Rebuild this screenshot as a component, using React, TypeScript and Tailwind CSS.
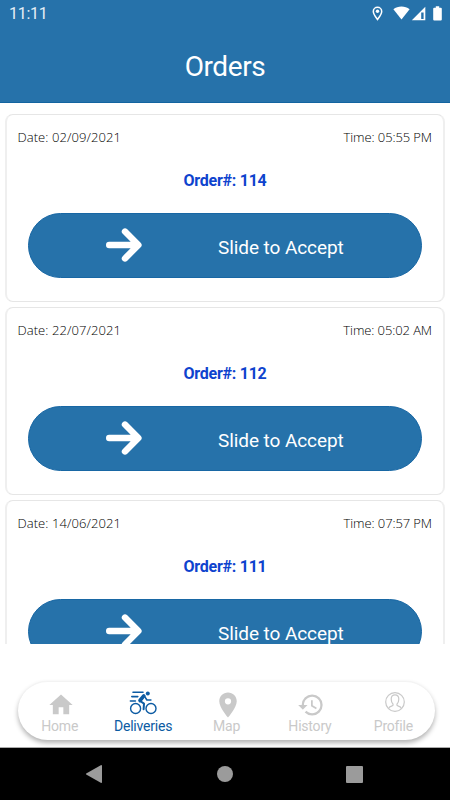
import React from "react";

interface Order {
  id: number;
  date: string;
  time: string;
}

interface Tab {
  label: string;
  icon: React.ReactNode;
  active?: boolean;
}

const orders: Order[] = [
  { id: 114, date: "02/09/2021", time: "05:55 PM" },
  { id: 112, date: "22/07/2021", time: "05:02 AM" },
  { id: 111, date: "14/06/2021", time: "07:57 PM" },
];

const HomeIcon = () => (
  <svg className="mt-[2px] ml-[3px]" width="28" height="28" viewBox="0 0 24 24" fill="currentColor">
    <path d="M10 20v-6h4v6h5v-8h3L12 3 2 12h3v8z" />
  </svg>
);

const BikeIcon = () => (
  <svg className="mb-[3px]" width="28" height="26" viewBox="0 0 28 26" fill="none" stroke="currentColor">
    <g strokeWidth="1.4">
      <circle cx="6.6" cy="18.5" r="5" />
      <circle cx="22" cy="18.5" r="5" />
    </g>
    <circle cx="18.8" cy="3.4" r="2" fill="currentColor" stroke="none" />
    <g strokeLinecap="round" strokeLinejoin="round">
      <path d="M4 2.2h10M2.8 6.6h6M1.4 11h5" strokeWidth="1.6" />
      <path d="M14.8 5.8l-3.8 4.7" strokeWidth="3.6" />
      <path d="M11.2 11l3.8 2.6-.4 5.6" strokeWidth="2" />
      <path d="M15.6 6.4l2.3 3.6h4" strokeWidth="1.6" />
    </g>
  </svg>
);

const PinIcon = () => (
  <svg className="mt-[2px] ml-[3px]" width="30" height="30" viewBox="0 0 24 24" fill="currentColor">
    <path d="M12 2C8.13 2 5 5.13 5 9c0 5.25 7 13 7 13s7-7.75 7-13c0-3.87-3.13-7-7-7zm0 9.5a2.500 2.500 0 1 1 0-5 2.500 2.500 0 0 1 0 5z" />
  </svg>
);

const HistoryIcon = () => (
  <svg className="mt-[2px] ml-[3px]" width="28" height="28" viewBox="0 0 24 24" fill="currentColor">
    <path d="M13 3a9 9 0 0 0-9 9H1l3.89 3.89.07.14L9 12H6c0-3.87 3.13-7 7-7s7 3.13 7 7-3.13 7-7 7c-1.93 0-3.68-.79-4.94-2.06l-1.42 1.42A8.954 8.954 0 0 0 13 21a9 9 0 0 0 0-18zm-1 5v5l4.28 2.54.72-1.21-3.5-2.08V8H12z" />
  </svg>
);

const ProfileIcon = () => (
  <svg className="mb-[4px] ml-[3px]" width="22" height="22" viewBox="0 0 22 22" fill="none" stroke="currentColor" strokeWidth="1.2">
    <circle cx="11" cy="11" r="9.3" />
    <path d="M4.6 17.6c.4-1.500 1.200-1.900 3-2.400 1.400-.4 1.800-.9 1.500-2-1.500-1.400-1.900-3-1.900-5.200C7.200 5.400 8.600 3.800 11 3.800s3.800 1.600 3.800 4.200c0 2.200-.4 3.800-1.900 5.200-.3 1.100.1 1.600 1.500 2 1.800.5 2.600.9 3 2.400" />
  </svg>
);

const tabs: Tab[] = [
  { label: "Home", icon: <HomeIcon /> },
  { label: "Deliveries", icon: <BikeIcon />, active: true },
  { label: "Map", icon: <PinIcon /> },
  { label: "History", icon: <HistoryIcon /> },
  { label: "Profile", icon: <ProfileIcon /> },
];

function StatusBar() {
  return (
    <div className="flex h-7 items-center justify-between pl-[9px] pr-2 text-white">
      <span className="text-[16px] leading-7 tracking-[-0.300px] text-[#e4eef6]">11:11</span>
      <div className="-mt-[2px] flex items-center">
        <svg className="mr-[10px]" width="11" height="15" viewBox="0 0 11 15" fill="none" stroke="currentColor">
          <path d="M5.500 13.500C3.500 10.800 1.300 8 1.300 5.400a4.200 4.200 0 0 1 8.400 0c0 2.600-2.200 5.400-4.200 8.100z" strokeWidth="1.500" />
          <circle cx="5.500" cy="5.300" r="1.700" fill="currentColor" stroke="none" />
        </svg>
        <svg className="mr-[1px]" width="17" height="14" viewBox="0 0 17 14" fill="currentColor">
          <path d="M8.500 13.500L.4 3.300C2.600 1.500 5.400.5 8.500.5s5.900 1 8.100 2.800z" />
        </svg>
        <svg className="mr-[7px]" width="15" height="15" viewBox="0 0 15 15">
          <path d="M14.300.8v13.500H.8z" fill="#fff" />
          <path d="M10.200 6.500h2.400V13h-2.400z" fill="#2672aa" />
        </svg>
        <svg width="9" height="15" viewBox="0 0 9 15" fill="currentColor">
          <path d="M2.800.3h3.400v1.400h1.600q1 0 1 1v10.800q0 1-1 1H1.200q-1 0-1-1V2.700q0-1 1-1h1.600z" />
        </svg>
      </div>
    </div>
  );
}

function OrderCard({ order }: { order: Order }) {
  return (
    <div className="h-[188px] shrink-0 rounded-[8px] border-x-2 border-y border-x-[#efefef] border-y-[#e6e6e6] bg-white px-[21px]">
      <div className="-mx-[10px] mt-[12px] flex justify-between font-['Open_Sans'] text-[13px] leading-5 font-light text-black">
        <span className="-ml-[0.500px] tracking-[0.070px]">Date: {order.date}</span>
        <span className="tracking-[-0.100px]">Time: {order.time}</span>
      </div>
      <div className="mt-6 text-center text-[16px] leading-5 font-bold tracking-[-0.250px] text-[#0e43ce]">
        Order#: {order.id}
      </div>
      <button className="mt-[22px] flex h-[65px] w-full items-center rounded-full border border-[#1867a4] bg-[#2672aa] text-white">
        <svg className="-mt-px ml-[76px]" width="38" height="36" viewBox="0 0 38 36" fill="none" stroke="currentColor" strokeWidth="6.400" strokeLinecap="round" strokeLinejoin="round">
          <path d="M4.200 18h28M20 4.600L33.400 18 20 31.400" />
        </svg>
        <span className="mt-[4px] ml-[75px] text-[19px] leading-6 tracking-[-0.080px] whitespace-nowrap">
          Slide to Accept
        </span>
      </button>
    </div>
  );
}

function TabBar() {
  return (
    <nav className="mt-[37px] mr-[15px] ml-[18px] flex h-[59px] shrink-0 rounded-full border-t border-[#f3f3f3] bg-white shadow-[0_3px_5px_rgba(0,0,0,0.3)]">
      {tabs.map((tab) => (
        <div
          key={tab.label}
          className={`flex flex-1 basis-0 flex-col items-center pt-[7px] ${
            tab.active ? "text-[#0c5ba3]" : "text-[#c9c9c9]"
          }`}
        >
          <div className="flex h-[30px] items-center justify-center">{tab.icon}</div>
          <span className="text-[14px] leading-[14px] tracking-[-0.200px]">{tab.label}</span>
        </div>
      ))}
    </nav>
  );
}

export default function App() {
  return (
    <div className="flex h-[800px] w-[450px] flex-col overflow-hidden bg-white font-[Roboto,sans-serif]">
      <header className="h-[103px] shrink-0 border-b border-[#1264a0] bg-[#2672aa]">
        <StatusBar />
        <h1 className="mt-[21px] text-center text-[28px] leading-9 tracking-[-0.400px] text-white">Orders</h1>
      </header>

      <main className="flex h-[541px] shrink-0 flex-col gap-[5px] overflow-hidden px-[5px] pt-[11px]">
        {orders.map((order) => (
          <OrderCard key={order.id} order={order} />
        ))}
      </main>

      <TabBar />

      <div className="mt-[7px] flex h-[53px] w-full shrink-0 items-center justify-between border-t border-[#aaaaaa] bg-black pr-[87px] pl-[85px] text-[#9b9b9b]">
        <svg width="18" height="20" viewBox="0 0 18 20" fill="currentColor">
          <path d="M16.200 1q.8 0 .8.800v16.400q0 .8-.8.800L1.200 10.400q-.5-.4 0-.8z" />
        </svg>
        <div className="h-4 w-4 rounded-full bg-[#9b9b9b]" />
        <div className="h-[17px] w-[17px] rounded-[1px] bg-[#9b9b9b]" />
      </div>
    </div>
  );
}
